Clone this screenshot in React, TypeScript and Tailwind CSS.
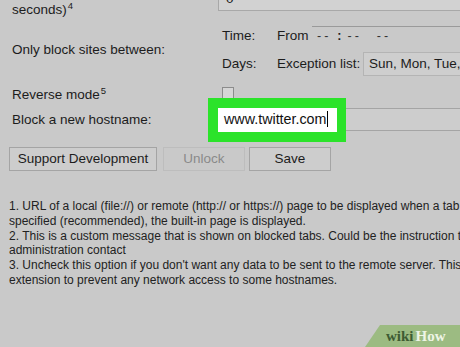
import React from "react";

const Dashes = () => (
  <span className="tracking-[3px] text-[#333]">--</span>
);

const App = () => {
  return (
    <div className="relative w-[460px] h-[347px] overflow-hidden bg-[#c9c9c9] font-['Liberation_Sans',Arial,sans-serif] text-[#1c1c1c]">
      {/* row: seconds */}
      <div className="flex h-[26px]">
        <div className="w-[218px] shrink-0 pl-3 text-[13.5px] leading-[20px]">
          seconds)<sup className="text-[9.5px] ml-[1px]">4</sup>
        </div>
        <div className="-mt-[12px] h-[23px] min-w-0 flex-1 border border-r-0 border-[#a8a8a8] bg-[#d2d2d2] pl-[7px] text-[13.5px] leading-[19px]">
          0
        </div>
      </div>

      {/* row: only block sites between */}
      <div className="flex h-[50px]">
        <div className="w-[218px] shrink-0 pl-3 flex items-center text-[13.5px] -mt-[2px]">
          Only block sites between:
        </div>
        <div className="min-w-0 flex-1 flex flex-col pl-1 text-[13.5px]">
          <div className="flex h-[20px] items-center">
            <span className="w-[55px] shrink-0">Time:</span>
            <span className="w-[35px] shrink-0">From</span>
            <div className="min-w-0 flex-1 h-[20px] border-t border-[#9a9a9a] flex items-center pl-[5px] text-[12.5px]">
              <Dashes />
              <span className="mx-[6px] font-bold">:</span>
              <Dashes />
              <span className="ml-[15px]">
                <Dashes />
              </span>
            </div>
          </div>
          <div className="flex h-[24px] mt-[6px] items-center">
            <span className="w-[55px] shrink-0">Days:</span>
            <span className="w-[86px] shrink-0">Exception list:</span>
            <div className="min-w-0 flex-1 h-[24px] border border-r-0 border-[#b4b4b4] bg-[#cecece] pl-[5px] text-[13.5px] leading-[22px] whitespace-nowrap overflow-hidden">
              Sun, Mon, Tue, Wed, Thu
            </div>
          </div>
        </div>
      </div>

      {/* row: reverse mode */}
      <div className="flex h-[22px] mt-[8px]">
        <div className="w-[218px] shrink-0 pl-3 text-[13.5px] leading-[22px]">
          Reverse mode<sup className="text-[9.5px] ml-[1px]">5</sup>
        </div>
        <div className="pl-1 pt-[3px]">
          <div className="w-[12px] h-[12px] border border-[#8c8c8c] bg-[#d6d6d6]" />
        </div>
      </div>

      {/* row: block a new hostname */}
      <div className="flex h-[23px] mt-[2px]">
        <div className="w-[218px] shrink-0 pl-3 text-[13.5px] leading-[23px]">
          Block a new hostname:
        </div>
        <div className="relative min-w-0 flex-1 h-[23px] border border-r-0 border-[#a4a4a4] bg-[#cdcdcd]">
          <div className="absolute -left-[11px] -top-[11px] w-[138px] h-[44px] border-[10px] border-r-[9px] border-[#2be32a] bg-white pl-[6px] text-[14.3px] leading-[23px] text-[#111] whitespace-nowrap">
            www.twitter.com
            <span className="inline-block w-[1px] h-[16px] bg-black align-[-3px] ml-[1px]" />
          </div>
        </div>
      </div>

      {/* buttons */}
      <div className="flex mt-[16px] pl-[9px] h-[24px] text-[13.5px]">
        <div className="w-[148px] border border-[#a4a4a4] bg-[#cdcdcd] flex items-center justify-center">
          Support Development
        </div>
        <div className="ml-[6px] w-[82px] border border-[#bdbdbd] bg-[#c9c9c9] flex items-center justify-center text-[#8a8a8a]">
          Unlock
        </div>
        <div className="ml-[4px] w-[82px] border border-[#a4a4a4] bg-[#cdcdcd] flex items-center justify-center">
          Save
        </div>
      </div>

      {/* footnotes */}
      <div className="mt-[28px] pl-[9px] text-[12px] leading-[14.8px] text-[#222] whitespace-nowrap">
        <p>1. URL of a local (file://) or remote (http:// or https://) page to be displayed when a tab is blocked. If not</p>
        <p>specified (recommended), the built-in page is displayed.</p>
        <p>2. This is a custom message that is shown on blocked tabs. Could be the instruction to contact</p>
        <p>administration contact</p>
        <p>3. Uncheck this option if you don't want any data to be sent to the remote server. This is useful</p>
        <p>extension to prevent any network access to some hostnames.</p>
      </div>

      {/* wikiHow badge */}
      <div className="absolute right-0 bottom-0 w-[95px] h-[22px] bg-[#9cbb82] [clip-path:polygon(15px_0,100%_0,100%_100%,0_100%)] flex items-center pl-[21px] font-['Liberation_Serif',serif] font-bold text-[15px] leading-none">
        <span className="text-[#3e5b33]">wiki</span>
        <span className="text-[#eef4e6] ml-[2px]">How</span>
      </div>
    </div>
  );
};

export default App;
